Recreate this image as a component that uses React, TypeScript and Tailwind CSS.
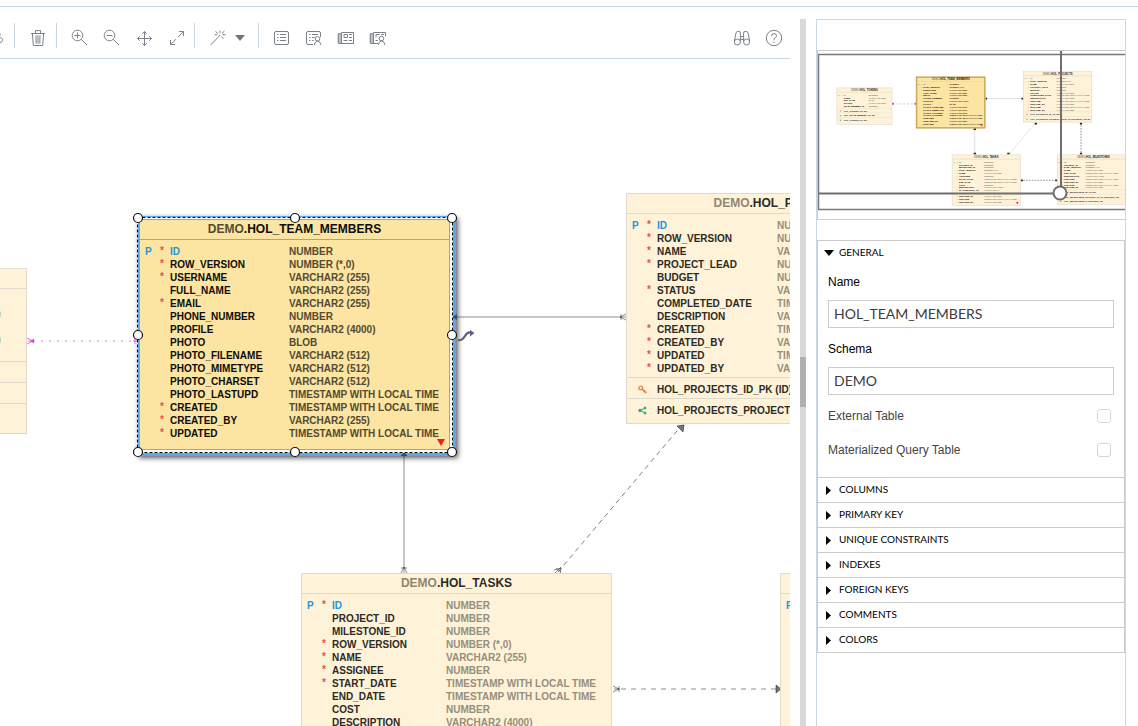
import React from "react";

type Column = [name: string, type: string, required?: boolean, primary?: boolean];
type Constraint = [kind: "pk" | "fk" | "idx", label: string];

interface Entity {
  id: string;
  x: number;
  y: number;
  width: number;
  typeOffset: number;
  footer?: number;
  selected?: boolean;
  more?: boolean;
  columns: Column[];
  constraints?: Constraint[];
}

const TS = "TIMESTAMP WITH LOCAL TIME";
const V255 = "VARCHAR2 (255)";

const entities: Entity[] = [
  {
    id: "HOL_TOKENS",
    x: -224,
    y: 209,
    width: 251,
    typeOffset: 144,
    footer: 12,
    columns: [
      ["ID", "NUMBER", true, true],
      ["NAME", V255],
      ["EXP_DATE", "DATE"],
      ["STATUS", V255],
      ["TEAM_MEMBER_ID", "NUMBER"],
    ],
    constraints: [
      ["pk", "HOL_TOKENS_PK (ID)"],
      ["fk", "HOL_TEAM_MEMBER_FK (ID)"],
      ["idx", "HOL_TOKENS_PK (ID)"],
    ],
  },
  {
    id: "HOL_TEAM_MEMBERS",
    x: 139,
    y: 160,
    width: 311,
    typeOffset: 150,
    selected: true,
    more: true,
    columns: [
      ["ID", "NUMBER", true, true],
      ["ROW_VERSION", "NUMBER (*,0)", true],
      ["USERNAME", V255, true],
      ["FULL_NAME", V255],
      ["EMAIL", V255, true],
      ["PHONE_NUMBER", "NUMBER"],
      ["PROFILE", "VARCHAR2 (4000)"],
      ["PHOTO", "BLOB"],
      ["PHOTO_FILENAME", "VARCHAR2 (512)"],
      ["PHOTO_MIMETYPE", "VARCHAR2 (512)"],
      ["PHOTO_CHARSET", "VARCHAR2 (512)"],
      ["PHOTO_LASTUPD", TS],
      ["CREATED", TS, true],
      ["CREATED_BY", V255, true],
      ["UPDATED", TS, true],
    ],
  },
  {
    id: "HOL_PROJECTS",
    x: 626,
    y: 134,
    width: 311,
    typeOffset: 151,
    columns: [
      ["ID", "NUMBER", true, true],
      ["ROW_VERSION", "NUMBER (*,0)", true],
      ["NAME", V255, true],
      ["PROJECT_LEAD", "NUMBER", true],
      ["BUDGET", "NUMBER"],
      ["STATUS", V255, true],
      ["COMPLETED_DATE", TS],
      ["DESCRIPTION", V255],
      ["CREATED", TS, true],
      ["CREATED_BY", V255, true],
      ["UPDATED", TS, true],
      ["UPDATED_BY", V255, true],
    ],
    constraints: [
      ["pk", "HOL_PROJECTS_ID_PK (ID)"],
      ["fk", "HOL_PROJECTS_PROJECT_LEAD_FK (PROJECT_LEAD)"],
    ],
  },
  {
    id: "HOL_TASKS",
    x: 301,
    y: 514,
    width: 311,
    typeOffset: 145,
    more: true,
    columns: [
      ["ID", "NUMBER", true, true],
      ["PROJECT_ID", "NUMBER"],
      ["MILESTONE_ID", "NUMBER"],
      ["ROW_VERSION", "NUMBER (*,0)", true],
      ["NAME", V255, true],
      ["ASSIGNEE", "NUMBER", true],
      ["START_DATE", TS, true],
      ["END_DATE", TS],
      ["COST", "NUMBER"],
      ["DESCRIPTION", "VARCHAR2 (4000)"],
      ["IS_COMPLETE_YN", "VARCHAR2 (1)", true],
      ["CREATED", TS, true],
      ["CREATED_BY", V255, true],
      ["UPDATED", TS, true],
      ["UPDATED_BY", V255, true],
    ],
  },
  {
    id: "HOL_MILESTONES",
    x: 780,
    y: 514,
    width: 330,
    typeOffset: 128,
    columns: [
      ["ID", "NUMBER", true, true],
      ["PROJECT_ID", "NUMBER", true],
      ["ROW_VERSION", "NUMBER (*,0)", true],
      ["NAME", V255, true],
      ["DUE_DATE", TS, true],
      ["DESCRIPTION", "VARCHAR2 (4000)"],
      ["CREATED", TS, true],
      ["CREATED_BY", V255, true],
      ["UPDATED", TS, true],
      ["UPDATED_BY", V255, true],
    ],
    constraints: [
      ["pk", "HOL_MILESTONES_ID_PK (ID)"],
      ["fk", "HOL_MILESTONES_PROJECT_ID_FK (PROJECT_ID)"],
      ["idx", "HOL_MILESTONES_I1 (PROJECT_ID)"],
    ],
  },
];

const entityHeight = (e: Entity) =>
  26 + e.columns.length * 13 + (e.constraints ? (e.footer ?? 7) + e.constraints.length * 21 : 10);

/* ---------- icons ---------- */

function Icon({ children }: { children: React.ReactNode }) {
  return (
    <svg width="18" height="18" viewBox="0 0 18 18" fill="none" stroke="currentColor" strokeWidth="1" aria-hidden="true">
      {children}
    </svg>
  );
}

const TrashIcon = () => (
  <Icon>
    <path d="M2 4.5h14M6.5 4V1.6h5V4M3.4 4.5l.9 12h9.4l.9-12M7 6.3l.2 8.400M9 6.3v8.400M11 6.3l-.2 8.400" />
  </Icon>
);
const ZoomInIcon = () => (
  <Icon>
    <circle cx="7.500" cy="6.500" r="5.300" />
    <path d="M11.400 10.400L17 16M4.500 6.500h6M7.500 3.500v6" />
  </Icon>
);
const ZoomOutIcon = () => (
  <Icon>
    <circle cx="7.500" cy="6.500" r="5.300" />
    <path d="M11.400 10.400L17 16M4.500 6.500h6" />
  </Icon>
);
const MoveIcon = () => (
  <Icon>
    <path d="M8.500 2.500v14M1.500 9.500h14M6.300 4.700L8.500 2.500l2.200 2.200M6.300 14.300l2.200 2.200 2.200-2.200M3.700 7.300L1.500 9.500l2.200 2.200M13.300 7.300l2.200 2.200-2.200 2.200" />
  </Icon>
);
const ExpandIcon = () => (
  <Icon>
    <path d="M10 8.200l5.500-5.700M11 2.500h4.500V7M8 10.200l-5.500 5.300M2.500 11v4.500H7" />
  </Icon>
);
const WandIcon = () => (
  <Icon>
    <path d="M1.500 16L9.800 7.600M11 1.500v2.800M6.500 2.500l2.300 2M15.500 2l-2.500 2.300M13.300 5.700h3.200M12.500 7.700l2 2.100M8.200 5.900H5.500M9.700 7.500L11 6" />
  </Icon>
);
const ListIcon = () => (
  <Icon>
    <rect x="1.500" y="2.500" width="14" height="13" rx="1.500" />
    <path d="M4 5.500h1.500M4 8.500h1.500M4 11.500h1.500M7 5.500h6M7 8.500h6M7 11.500h6" />
  </Icon>
);
const ListUserIcon = () => (
  <Icon>
    <path d="M8 15.500H3Q1.500 15.500 1.500 14V4Q1.500 2.500 3 2.500h11Q15.500 2.500 15.500 4V8M4 5.500h1.500M4 8.500h1.500M4 11.500h1.500M7 5.500h6M7 8.500h2.500M7 11.500h1.500" />
    <circle cx="12.500" cy="9.800" r="2.300" />
    <path d="M9.300 16q.3-3.200 3.200-4Q15.700 12.800 16 16" />
  </Icon>
);
const CardIcon = () => (
  <Icon>
    <path d="M1 4.500h3.500v10H1z" fill="currentColor" fillOpacity=".5" stroke="none" />
    <path d="M4.500 14.500v-11H16.500v11H2Q1.200 14.500 1.200 13.500V4.800H4.500M7 5.500h3.500v3H7zM12 5.500h3M12 8.500h3M6.500 11.500h4M12 11.500h3" />
  </Icon>
);
const CardUserIcon = () => (
  <Icon>
    <path d="M1 4.500h3.500v10H1z" fill="currentColor" fillOpacity=".5" stroke="none" />
    <path d="M16.500 7.500v-4h-12v11M9 14.500H2Q1.200 14.500 1.200 13.500V4.800H4.500M7 8.500v-3h3.500M12 5.500h3M6.500 11.500h2.500" />
    <circle cx="12.500" cy="9.500" r="2.300" />
    <path d="M9.300 16q.3-3.400 3.200-4.200Q15.700 12.600 16 16" />
  </Icon>
);
const BinocularsIcon = () => (
  <Icon>
    <circle cx="4.400" cy="13" r="3" />
    <circle cx="13.600" cy="13" r="3" />
    <path d="M1.400 12L3 4Q3.200 2.500 4.700 2.500h1.300Q7.400 2.500 7.400 4V12M16.600 12L15 4Q14.800 2.500 13.300 2.500h-1.300q-1.400 0-1.400 1.500V12M7.400 7.500h3.200M7.400 10.500h3.200" />
  </Icon>
);
const HelpIcon = () => (
  <Icon>
    <circle cx="9" cy="9" r="7.700" />
    <path d="M6.500 7Q6.600 4.500 9 4.500t2.500 2.200Q11.500 8 10.200 8.800 9 9.500 9 11.200M9 12.700v1.300" />
  </Icon>
);
const LinkIcon = () => (
  <Icon>
    <path d="M12 3q3 1 2 3.500T12 9M13 8.500q4 .2 3.500 3T13 13.500" />
  </Icon>
);

function ToolButton({ label, children }: { label: string; children: React.ReactNode }) {
  return (
    <button type="button" aria-label={label} className="flex h-8 w-8 shrink-0 items-center justify-center text-[#7b8287]">
      {children}
    </button>
  );
}

const Separator = ({ className }: { className: string }) => (
  <div className={`mb-1 h-[25px] w-px shrink-0 bg-[#c9d8e2] ${className}`} />
);

function Toolbar() {
  return (
    <div role="toolbar" className="flex h-10 shrink-0 items-center border-b border-[#c9d8e2] pb-[2px]">
      <div className="flex w-[14px] shrink-0 justify-end overflow-hidden pr-[10px] text-[#7b8287]">
        <span className="shrink-0">
          <LinkIcon />
        </span>
      </div>
      <Separator className="mr-[7px]" />
      <ToolButton label="Delete"><TrashIcon /></ToolButton>
      <Separator className="mr-[6px] ml-[2px]" />
      <ToolButton label="Zoom in"><ZoomInIcon /></ToolButton>
      <ToolButton label="Zoom out"><ZoomOutIcon /></ToolButton>
      <div className="w-[2px]" />
      <ToolButton label="Pan"><MoveIcon /></ToolButton>
      <ToolButton label="Fit to screen"><ExpandIcon /></ToolButton>
      <Separator className="mr-[7px] ml-[1px]" />
      <ToolButton label="Auto layout"><WandIcon /></ToolButton>
      <button type="button" aria-label="Layout options" className="flex h-8 w-3 shrink-0 items-center justify-center text-[#70777c]">
        <svg width="10" height="6" viewBox="0 0 10 6" fill="currentColor" aria-hidden="true">
          <path d="M0 0h10L5 6z" />
        </svg>
      </button>
      <Separator className="mr-[7px] ml-3" />
      <ToolButton label="Show details"><ListIcon /></ToolButton>
      <ToolButton label="Show details for selection"><ListUserIcon /></ToolButton>
      <ToolButton label="Show cards"><CardIcon /></ToolButton>
      <ToolButton label="Show cards for selection"><CardUserIcon /></ToolButton>
      <div className="flex-1" />
      <ToolButton label="Find"><BinocularsIcon /></ToolButton>
      <ToolButton label="Help"><HelpIcon /></ToolButton>
    </div>
  );
}

/* ---------- diagram ---------- */

function ConstraintIcon({ kind }: { kind: Constraint[0] }) {
  if (kind === "pk") {
    return (
      <svg width="9" height="9" viewBox="0 0 9 9" fill="none" stroke="#f0773c" strokeWidth="1.2" aria-hidden="true">
        <ellipse cx="2.700" cy="3" rx="2" ry="1.600" transform="rotate(-25 2.700 3)" />
        <path d="M4 4l4 4M5.500 7L7 5.300M7.200 8L8.500 6.800" />
      </svg>
    );
  }
  return (
    <svg width="9" height="9" viewBox="0 0 9 9" fill="#2fae7d" stroke="#2fae7d" aria-hidden="true">
      <path d="M2 4.500L7 2M2 4.500L7 7" fill="none" />
      <circle cx="2" cy="4.500" r="1.300" />
      <circle cx="7" cy="2" r="1" />
      <circle cx="7" cy="7" r="1" />
    </svg>
  );
}

function EntityCard({ entity: e }: { entity: Entity }) {
  const line = e.selected ? "border-[#b5a373]" : "border-[#dfdacb]";
  return (
    <section
      className={`absolute overflow-hidden border font-bold ${line} ${e.selected ? "bg-[#fce4a3]" : "bg-[#fef3d9]"}`}
      style={{ left: e.x, top: e.y, width: e.width, height: entityHeight(e) }}
    >
      <h2 className={`h-5 border-b text-center text-[12px] leading-[19px] ${line} ${e.selected ? "text-[#0d0c09]" : "text-[#2d2a24]"}`}>
        <span className={e.selected ? "text-[#544a33]" : "text-[#8f8773]"}>DEMO</span>.{e.id}
      </h2>
      <table className="mt-[5px] w-full table-fixed border-collapse text-[10px] leading-[13px] whitespace-nowrap">
        <colgroup>
          <col className="w-5" />
          <col className="w-[10px]" />
          <col style={{ width: e.typeOffset - 31 }} />
          <col />
        </colgroup>
        <tbody>
          {e.columns.map(([name, type, required, primary]) => (
            <tr key={name} className="h-[13px]">
              <td className="p-0 pl-[5px] text-[#2493dc]">{primary ? "P" : ""}</td>
              <td className="p-0 align-top leading-[11px] text-[#e8504a]">{required ? "*" : ""}</td>
              <td className={`p-0 ${primary ? "text-[#2493dc]" : e.selected ? "text-[#0d0c09]" : "text-[#2d2a24]"}`}>{name}</td>
              <td className={`p-0 ${e.selected ? "text-[#544a2f]" : "text-[#968e7a]"}`}>{type}</td>
            </tr>
          ))}
        </tbody>
      </table>
      {e.constraints && (
        <ul className="mt-[2px] text-[10px] whitespace-nowrap text-[#2d2a24]">
          {e.constraints.map(([kind, label], i) => (
            <li key={i} className={`flex h-[21px] items-center border-t pt-[3px] pl-[11px] ${line}`}>
              <span className="w-[19px] shrink-0">
                <ConstraintIcon kind={kind} />
              </span>
              {label}
            </li>
          ))}
        </ul>
      )}
      {e.more && (
        <svg className="absolute right-1 bottom-[3px]" width="8" height="7" viewBox="0 0 8 7" aria-hidden="true">
          <path d="M0 0h8L4 7z" fill="#ff1a1a" />
        </svg>
      )}
    </section>
  );
}

function SelectionFrame({ entity: e }: { entity: Entity }) {
  return (
    <div
      className="absolute border-[3px] border-t-2 border-l-2 border-[#5fa5ea] bg-white shadow-[2px_2px_5px_rgba(0,0,0,0.65)]"
      style={{ left: e.x - 2, top: e.y - 3, width: e.width + 8, height: entityHeight(e) + 9 }}
    />
  );
}

function Links() {
  return (
    <g fill="none" stroke="#000000" strokeOpacity=".45">
      <path d="M33 282H139" stroke="#d84be0" strokeOpacity=".4" strokeWidth="2" strokeDasharray="2 6" />
      <path d="M27 279l6 3-6 3M28 282h6M135 279v6M133 282h5" stroke="#d84be0" strokeOpacity=".75" />
      <path d="M34 279.500v5l-4-2.500z" fill="#d84be0" stroke="none" />
      <path d="M454 258H626" strokeOpacity=".22" strokeWidth="2" />
      <path d="M626 255l-6 3 6 3M621 255v6" />
      <path d="M404 397V514" strokeOpacity=".22" strokeWidth="2" />
      <path d="M401 514l3-6 3 6M401 509h6" />
      <path d="M558 513L682 366" strokeDasharray="5 4" strokeOpacity=".5" />
      <path d="M554 511l7-2-1 6M556 509l5 4M555 514l6-6" />
      <path d="M684 366l-7 1 6 6z" fill="#777777" />
      <path d="M621 630H776" strokeDasharray="5 5" strokeOpacity=".22" strokeWidth="2" />
      <path d="M613 627l6 3-6 3M614 630h6M619 627v6" />
      <path d="M776 626v8l5-4z" fill="#777777" />
    </g>
  );
}

function SelectionHandles() {
  const points = [[138, 159], [295, 159], [452, 159], [138, 276], [452, 276], [138, 393], [295, 393], [452, 393]];
  return (
    <g>
      <path d="M454 255v6M457 255l-5 3 5 3zM400.500 397l3.500-4 3.500 4z" fill="#2f5278" />
      <rect x="137.500" y="158.500" width="315" height="235" fill="none" stroke="#ffffff" />
      <rect x="137.500" y="158.500" width="315" height="235" fill="none" stroke="#000000" strokeDasharray="3 2" />
      {points.map(([cx, cy]) => (
        <circle key={`${cx}-${cy}`} cx={cx} cy={cy} r="4.500" fill="#ffffff" stroke="#111111" strokeWidth="1.200" />
      ))}
      <path d="M458 281q4 1 7-4t7-3" fill="none" stroke="#5f5f86" strokeWidth="2.200" />
      <path d="M470 271l4.500 3-4.500 3.500z" fill="#5f5f86" />
    </g>
  );
}

function Canvas() {
  return (
    <main className="relative min-h-0 flex-1 overflow-hidden bg-white">
      {entities.filter((e) => e.selected).map((e) => <SelectionFrame key={e.id} entity={e} />)}
      <svg className="absolute inset-0 h-full w-full" aria-hidden="true">
        <Links />
      </svg>
      {entities.map((e) => <EntityCard key={e.id} entity={e} />)}
      <svg className="pointer-events-none absolute inset-0 h-full w-full" aria-hidden="true">
        <SelectionHandles />
      </svg>
    </main>
  );
}

/* ---------- overview ---------- */

function OverviewEntity({ entity: e }: { entity: Entity }) {
  const h = entityHeight(e);
  const dividers = (e.constraints ?? []).map((_, i) => e.y + 28 + e.columns.length * 13 + i * 21);
  return (
    <g fontSize="10" fontWeight="700">
      <rect x={e.x} y={e.y} width={e.width} height={h} fill={e.selected ? "#fce4a3" : "#fef3d9"} stroke={e.selected ? "#c9ab58" : "#e0dccf"} strokeWidth={e.selected ? 7 : 3} />
      <path d={`M${e.x} ${e.y + 20}h${e.width}`} stroke="#e0d0a0" strokeWidth="2" />
      <text x={e.x + e.width / 2} y={e.y + 15} fontSize="12" textAnchor="middle" fill="#222222">
        <tspan fill="#8f8773">DEMO</tspan>.{e.id}
      </text>
      {e.columns.map(([name, type, required, primary], i) => {
        const y = e.y + 36 + i * 13;
        return (
          <g key={name}>
            {primary && <text x={e.x + 6} y={y} fill="#2493dc">P</text>}
            {required && <text x={e.x + 21} y={y} fill="#e8403a">*</text>}
            <text x={e.x + 31} y={y} fill={primary ? "#2493dc" : "#000000"}>{name}</text>
            <text x={e.x + e.typeOffset} y={y} fill={e.selected ? "#3a3220" : "#8a826e"}>{type}</text>
          </g>
        );
      })}
      {(e.constraints ?? []).map(([kind, label], i) => (
        <g key={i}>
          <path d={`M${e.x} ${dividers[i]}h${e.width}`} stroke="#e4dcc4" strokeWidth="2" />
          <circle cx={e.x + 16} cy={dividers[i] + 12} r="3" fill={kind === "pk" ? "#f0773c" : "#2fae7d"} />
          <text x={e.x + 31} y={dividers[i] + 16} fill="#111111">{label}</text>
        </g>
      ))}
      {e.more && <path d={`M${e.x + e.width - 20} ${e.y + h - 16}h12l-6 10z`} fill="#ff1a1a" />}
    </g>
  );
}

function Overview() {
  return (
    <div className="h-[170px] shrink-0 overflow-hidden border-y border-l border-[#cccccc]">
      <svg width="308" height="168" viewBox="0 0 308 168" aria-label="Diagram overview" role="img">
        <rect x="0.500" y="3.500" width="340" height="155" fill="#ffffff" stroke="#777777" strokeWidth="1.500" />
        <svg x="0" y="0" width="308" height="168" viewBox="-310 41 1403 765" preserveAspectRatio="xMinYMin meet">
          <g fill="none" stroke="#555555" strokeWidth="3">
            <path d="M27 282H139" stroke="#d84be0" strokeOpacity=".6" strokeDasharray="10 7" />
            <path d="M450 258H626M404 391V514" strokeOpacity=".3" />
            <path d="M558 514L682 366" strokeOpacity=".5" strokeDasharray="5 6" />
            <path d="M612 630H780M888 366V514" strokeDasharray="7 6" />
          </g>
          <g fill="#222222">
            <path d="M452 254h8v8h-8zM617 254h8v8h-8zM399 393h11v8h-11zM399 504h11v8h-11zM552 505h11v8h-11zM677 368h11v8h-11zM614 626h9v8h-9zM771 626h9v8h-9zM883 368h10v8h-10zM883 504h10v8h-10z" />
            <path d="M27 277h9v9h-9zM130 277h9v9h-9z" fill="#c93cd6" />
          </g>
          {entities.map((e) => <OverviewEntity key={e.id} entity={e} />)}
        </svg>
        <path d="M243 0v136M0 142.500h237" fill="none" stroke="#6f6f6f" strokeWidth="2" />
        <circle cx="242" cy="142" r="6.500" fill="#ffffff" stroke="#6f6f6f" strokeWidth="2" />
      </svg>
    </div>
  );
}

/* ---------- properties ---------- */

const sections = ["COLUMNS", "PRIMARY KEY", "UNIQUE CONSTRAINTS", "INDEXES", "FOREIGN KEYS", "COMMENTS", "COLORS"];

function TextField({ id, label, value }: { id: string; label: string; value: string }) {
  return (
    <div className="flex flex-col gap-[9px]">
      <label htmlFor={id} className="text-[12px] leading-[18px] text-black">{label}</label>
      <input
        id={id}
        defaultValue={value}
        className="h-7 w-full border border-[#cccccc] bg-white px-[5px] pb-[1px] font-[Lato,sans-serif] text-[14px] text-[#3c3c3c] outline-none"
      />
    </div>
  );
}

function CheckField({ id, label }: { id: string; label: string }) {
  return (
    <div className="flex h-[34px] items-center justify-between pr-[3px]">
      <label htmlFor={id} className="text-[12px] text-[#444444]">{label}</label>
      <input id={id} type="checkbox" className="h-[14px] w-[14px] appearance-none rounded-[3px] border border-[#d5d5d5] bg-white" />
    </div>
  );
}

function Properties() {
  return (
    <div className="border border-b-0 border-[#cccccc]">
      <button type="button" className="flex h-6 w-full items-center gap-[5px] pl-[6px] font-[Lato,sans-serif] text-[10px] text-black">
        <svg width="10" height="6" viewBox="0 0 10 6" aria-hidden="true"><path d="M0 0h10L5 6z" /></svg>
        <span className="pb-[1px]">GENERAL</span>
      </button>
      <div className="flex flex-col gap-3 px-[10px] pt-2">
        <TextField id="entity-name" label="Name" value="HOL_TEAM_MEMBERS" />
        <TextField id="entity-schema" label="Schema" value="DEMO" />
      </div>
      <div className="px-[10px] pt-1 pb-[10px]">
        <CheckField id="external-table" label="External Table" />
        <CheckField id="materialized-query" label="Materialized Query Table" />
      </div>
      {sections.map((s) => (
        <button key={s} type="button" className="flex h-[25px] w-full items-center gap-2 border-t border-[#cccccc] pl-2 font-[Lato,sans-serif] text-[10px] text-black">
          <svg width="5" height="9" viewBox="0 0 5 9" aria-hidden="true"><path d="M0 0v9l5-4.500z" /></svg>
          <span className="pb-[1px]">{s}</span>
        </button>
      ))}
      <div className="border-t border-[#cccccc]" />
    </div>
  );
}

export default function App() {
  return (
    <div className="flex h-screen flex-col overflow-hidden bg-white font-['Liberation_Sans',Arial,sans-serif]">
      <div className="h-[7px] shrink-0 border-b border-[#c9d8e2] bg-[#fcfcfc]" />
      <div className="flex min-h-0 flex-1 pt-3 pr-3">
        <div className="flex min-w-0 flex-1 flex-col">
          <Toolbar />
          <Canvas />
        </div>
        <div className="mx-[10px] flex w-[6px] shrink-0 flex-col justify-center bg-[#d8d8d8] pt-[18px]">
          <div className="h-[50px] bg-[#b0b0b0]" />
        </div>
        <aside className="flex w-[310px] shrink-0 flex-col border border-b-0 border-[#c9d8e2]">
          <div className="h-[30px] shrink-0" />
          <Overview />
          <div className="h-5 shrink-0" />
          <Properties />
        </aside>
      </div>
    </div>
  );
}
